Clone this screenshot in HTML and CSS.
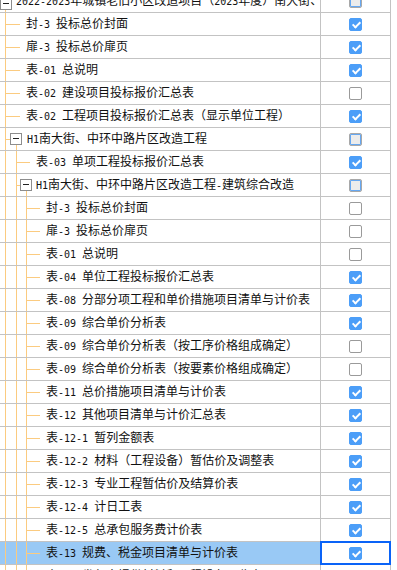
FILE: index.html
```html
<!DOCTYPE html>
<html lang="zh-CN">
<head>
<meta charset="utf-8">
<title>报表目录</title>
<link rel="stylesheet" href="styles.css">
</head>
<body>
<div class="grid">
  <div class="row"><div class="name top"><span class="box"></span><span class="t"><span class="a">2022-2023</span>年城镇老旧小区改造项目（<span class="a">2023</span>年度）南大街、中环中路片区改造工程</span></div><div class="chk"><span class="cb part"></span></div></div>
  <div class="row"><div class="name leaf1"><span class="t">封<span class="a">-3 </span>投标总价封面</span></div><div class="chk"><span class="cb on"></span></div></div>
  <div class="row"><div class="name leaf1"><span class="t">扉<span class="a">-3 </span>投标总价扉页</span></div><div class="chk"><span class="cb on"></span></div></div>
  <div class="row"><div class="name leaf1"><span class="t">表<span class="a">-01 </span>总说明</span></div><div class="chk"><span class="cb on"></span></div></div>
  <div class="row"><div class="name leaf1"><span class="t">表<span class="a">-02 </span>建设项目投标报价汇总表</span></div><div class="chk"><span class="cb"></span></div></div>
  <div class="row"><div class="name leaf1"><span class="t">表<span class="a">-02 </span>工程项目投标报价汇总表（显示单位工程）</span></div><div class="chk"><span class="cb on"></span></div></div>
  <div class="row"><div class="name node1"><span class="box"></span><span class="t"><span class="a">H1</span>南大街、中环中路片区改造工程</span></div><div class="chk"><span class="cb part"></span></div></div>
  <div class="row"><div class="name leaf2"><span class="t">表<span class="a">-03 </span>单项工程投标报价汇总表</span></div><div class="chk"><span class="cb on"></span></div></div>
  <div class="row"><div class="name node2"><span class="box"></span><span class="t"><span class="a">H1</span>南大街、中环中路片区改造工程<span class="a">-</span>建筑综合改造</span></div><div class="chk"><span class="cb part"></span></div></div>
  <div class="row"><div class="name leaf3"><span class="t">封<span class="a">-3 </span>投标总价封面</span></div><div class="chk"><span class="cb"></span></div></div>
  <div class="row"><div class="name leaf3"><span class="t">扉<span class="a">-3 </span>投标总价扉页</span></div><div class="chk"><span class="cb"></span></div></div>
  <div class="row"><div class="name leaf3"><span class="t">表<span class="a">-01 </span>总说明</span></div><div class="chk"><span class="cb"></span></div></div>
  <div class="row"><div class="name leaf3"><span class="t">表<span class="a">-04 </span>单位工程投标报价汇总表</span></div><div class="chk"><span class="cb on"></span></div></div>
  <div class="row"><div class="name leaf3"><span class="t">表<span class="a">-08 </span>分部分项工程和单价措施项目清单与计价表</span></div><div class="chk"><span class="cb on"></span></div></div>
  <div class="row"><div class="name leaf3"><span class="t">表<span class="a">-09 </span>综合单价分析表</span></div><div class="chk"><span class="cb on"></span></div></div>
  <div class="row"><div class="name leaf3"><span class="t">表<span class="a">-09 </span>综合单价分析表（按工序价格组成确定）</span></div><div class="chk"><span class="cb"></span></div></div>
  <div class="row"><div class="name leaf3"><span class="t">表<span class="a">-09 </span>综合单价分析表（按要素价格组成确定）</span></div><div class="chk"><span class="cb"></span></div></div>
  <div class="row"><div class="name leaf3"><span class="t">表<span class="a">-11 </span>总价措施项目清单与计价表</span></div><div class="chk"><span class="cb on"></span></div></div>
  <div class="row"><div class="name leaf3"><span class="t">表<span class="a">-12 </span>其他项目清单与计价汇总表</span></div><div class="chk"><span class="cb on"></span></div></div>
  <div class="row"><div class="name leaf3"><span class="t">表<span class="a">-12-1 </span>暂列金额表</span></div><div class="chk"><span class="cb on"></span></div></div>
  <div class="row"><div class="name leaf3"><span class="t">表<span class="a">-12-2 </span>材料（工程设备）暂估价及调整表</span></div><div class="chk"><span class="cb on"></span></div></div>
  <div class="row"><div class="name leaf3"><span class="t">表<span class="a">-12-3 </span>专业工程暂估价及结算价表</span></div><div class="chk"><span class="cb on"></span></div></div>
  <div class="row"><div class="name leaf3"><span class="t">表<span class="a">-12-4 </span>计日工表</span></div><div class="chk"><span class="cb on"></span></div></div>
  <div class="row"><div class="name leaf3"><span class="t">表<span class="a">-12-5 </span>总承包服务费计价表</span></div><div class="chk"><span class="cb on"></span></div></div>
  <div class="row sel"><div class="name leaf3"><span class="t">表<span class="a">-13 </span>规费、税金项目清单与计价表</span></div><div class="chk"><span class="cb on"></span></div></div>
  <div class="row"><div class="name leaf3"><span class="t">表<span class="a">-20 </span>发包人提供材料和工程设备一览表</span></div><div class="chk"><span class="cb"></span></div></div>
</div>
</body>
</html>
```

FILE: styles.css
```css
:root {
  --o: #fbcb80;
  --grid: #c3c3c3;
}

html, body {
  margin: 0;
  padding: 0;
  background: #ffffff;
  overflow: hidden;
}

body {
  font-family: "Noto Sans CJK SC", sans-serif;
  font-size: 12px;
  color: #111;
}

.grid {
  width: 391px;
  margin-top: -10px;
}

.row {
  display: flex;
  height: 23px;
  box-sizing: border-box;
  border-bottom: 1px solid var(--grid);
}

.name {
  flex: 0 0 321px;
  box-sizing: border-box;
  border-right: 1px solid var(--grid);
  display: flex;
  align-items: center;
  overflow: hidden;
  white-space: nowrap;
  background-repeat: no-repeat;
}

.t {
  line-height: 22px;
  white-space: pre;
}

.a {
  font-family: "DejaVu Sans Mono", monospace;
  font-size: 10px;
}

.chk {
  flex: 0 0 70px;
  box-sizing: border-box;
  border-right: 1px solid var(--grid);
  display: flex;
  align-items: center;
  justify-content: center;
}

/* tree expander box */
.box {
  flex: 0 0 auto;
  width: 12px;
  height: 12px;
  box-sizing: border-box;
  border: 1px solid #8d8d8d;
  background: #fff;
  position: relative;
}

.box::before {
  content: "";
  position: absolute;
  left: 2px;
  right: 2px;
  top: 4px;
  height: 1px;
  background: #222;
}

/* tree guide lines */
.top {
  padding-left: 0;
  background-image: linear-gradient(var(--o), var(--o));
  background-size: 1px 3px;
  background-position: 5px 19px;
}
.top .box {
  margin-right: 4px;
  margin-top: 6px;
}

.leaf1 {
  padding-left: 26px;
  background-image:
    linear-gradient(var(--o), var(--o)),
    linear-gradient(var(--o), var(--o));
  background-size: 1px 100%, 15px 1px;
  background-position: 5px 0, 5px 11px;
}

.node1 {
  padding-left: 10px;
  background-image:
    linear-gradient(var(--o), var(--o)),
    linear-gradient(var(--o), var(--o)),
    linear-gradient(var(--o), var(--o));
  background-size: 1px 100%, 5px 1px, 1px 5px;
  background-position: 5px 0, 5px 11px, 16px 17px;
}
.node1 .box { margin-right: 5px; }

.leaf2 {
  padding-left: 36px;
  background-image:
    linear-gradient(var(--o), var(--o)),
    linear-gradient(var(--o), var(--o)),
    linear-gradient(var(--o), var(--o));
  background-size: 1px 100%, 1px 100%, 14px 1px;
  background-position: 5px 0, 16px 0, 16px 11px;
}

.node2 {
  padding-left: 20px;
  background-image:
    linear-gradient(var(--o), var(--o)),
    linear-gradient(var(--o), var(--o)),
    linear-gradient(var(--o), var(--o)),
    linear-gradient(var(--o), var(--o));
  background-size: 1px 100%, 1px 100%, 4px 1px, 1px 5px;
  background-position: 5px 0, 16px 0, 16px 11px, 26px 17px;
}
.node2 .box { margin-right: 4px; }

.leaf3 {
  padding-left: 46px;
  background-image:
    linear-gradient(var(--o), var(--o)),
    linear-gradient(var(--o), var(--o)),
    linear-gradient(var(--o), var(--o)),
    linear-gradient(var(--o), var(--o));
  background-size: 1px 100%, 1px 100%, 1px 100%, 14px 1px;
  background-position: 5px 0, 16px 0, 26px 0, 26px 11px;
}

/* checkboxes */
.cb {
  width: 13px;
  height: 13px;
  box-sizing: border-box;
  border: 1px solid #9a9a9a;
  border-radius: 2px;
  background: #fff;
  position: relative;
}

.cb.on {
  background: #4c9ef8;
  border-color: #4c9ef8;
}

.cb.on::after {
  content: "";
  position: absolute;
  left: 3.5px;
  top: 1px;
  width: 3px;
  height: 6px;
  border: solid #fff;
  border-width: 0 2px 2px 0;
  transform: rotate(45deg);
}

.cb.part {
  border-color: #a8a8a8;
  background: #ececec;
  box-shadow: inset 0 0 0 1px #66a8f2;
}

/* selected row */
.row.sel .name {
  background-color: #99c9f5;
}

.row.sel .chk {
  position: relative;
}

.row.sel .chk::after {
  content: "";
  position: absolute;
  left: -1px;
  top: -1px;
  right: -1px;
  bottom: -1px;
  border: 2px solid #0a63f7;
}
```
